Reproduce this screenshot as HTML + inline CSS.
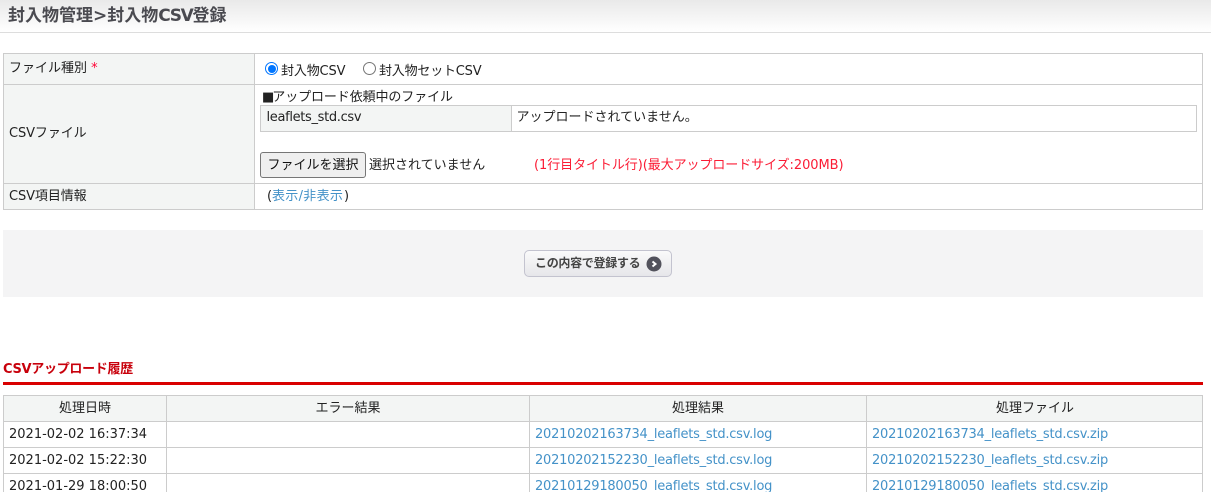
<!DOCTYPE html>
<html lang="ja">
<head>
<meta charset="utf-8">
<title>封入物CSV登録</title>
<style>
html,body{margin:0;padding:0;background:#fff;width:1211px;height:492px;overflow:hidden}
body{position:relative;font:13px/18px "DejaVu Sans","Noto Sans CJK JP",sans-serif;color:#222}
.a{position:absolute;white-space:nowrap}
.ln{position:absolute;background:#ccc}
a{color:#4492c8;text-decoration:none}
.f{letter-spacing:-.23px}
.hd{left:0;top:0;width:1211px;height:32px;background:linear-gradient(#e9e9e9,#fff);border-bottom:1px solid #ddd}
.sh{background:#f3f5f4;position:absolute}
.c{text-align:center}
.radio{position:absolute;width:13px;height:13px;box-sizing:border-box;border-radius:50%;background:#fff;border:1px solid #767676}
.radio.on{border:1px solid #0075ff;}
.radio.on:after{content:"";position:absolute;left:1.5px;top:1.5px;width:8px;height:8px;border-radius:50%;background:#0075ff}
.fbtn{position:absolute;left:260px;top:152px;width:106px;height:26px;box-sizing:border-box;border:1px solid #767676;border-radius:3px;background:#efefef;text-align:center;line-height:25px;color:#111}
.sub{left:3px;top:230px;width:1200px;height:67px;background:#f4f4f5}
.btn{position:absolute;left:524px;top:250px;width:148px;height:27px;box-sizing:border-box;border:1px solid #c3c3cf;border-radius:5px;background:linear-gradient(#fafafa,#e6e6ea);font-weight:bold;color:#444;font-size:12px;line-height:24px;padding-left:10px;letter-spacing:-.3px}
</style>
</head>
<body>
<div class="a hd"></div>
<div class="a" style="left:8px;top:4px;font-size:17px;line-height:24px;font-weight:bold;color:#4a4a50">封入物管理&gt;封入物<span style="letter-spacing:-1.3px">CSV</span>登録</div>

<!-- form table -->
<div class="sh" style="left:3px;top:53px;width:251px;height:156px"></div>
<div class="ln" style="left:3px;top:53px;width:1200px;height:1px"></div>
<div class="ln" style="left:3px;top:84px;width:1200px;height:1px"></div>
<div class="ln" style="left:3px;top:183px;width:1200px;height:1px"></div>
<div class="ln" style="left:3px;top:209px;width:1200px;height:1px"></div>
<div class="ln" style="left:3px;top:53px;width:1px;height:157px"></div>
<div class="ln" style="left:254px;top:53px;width:1px;height:157px"></div>
<div class="ln" style="left:1202px;top:53px;width:1px;height:157px"></div>

<div class="a" style="left:9px;top:60px">ファイル種別 <span style="color:#f03">*</span></div>
<div class="a" style="left:9px;top:125px;letter-spacing:-.1px">CSVファイル</div>
<div class="a" style="left:9px;top:188px;letter-spacing:-.1px">CSV項目情報</div>

<span class="radio on" style="left:265px;top:62px"></span>
<div class="a" style="left:281px;top:63px;letter-spacing:-.15px">封入物CSV</div>
<span class="radio" style="left:363px;top:62px"></span>
<div class="a" style="left:379px;top:63px;letter-spacing:-.2px">封入物セットCSV</div>

<div class="a" style="left:262px;top:89px;letter-spacing:-.1px"><span style="letter-spacing:-2px">■</span>アップロード依頼中のファイル</div>

<div class="sh" style="left:260px;top:105px;width:251px;height:26px"></div>
<div class="ln" style="left:260px;top:105px;width:937px;height:1px"></div>
<div class="ln" style="left:260px;top:131px;width:937px;height:1px"></div>
<div class="ln" style="left:260px;top:105px;width:1px;height:27px"></div>
<div class="ln" style="left:511px;top:105px;width:1px;height:27px"></div>
<div class="ln" style="left:1196px;top:105px;width:1px;height:27px"></div>
<div class="a" style="left:266.5px;top:109px;letter-spacing:-.33px">leaflets_std.csv</div>
<div class="a" style="left:516.5px;top:109px">アップロードされていません。</div>

<div class="fbtn">ファイルを選択</div>
<div class="a" style="left:369px;top:157px">選択されていません</div>
<div class="a" style="left:534px;top:157px;color:#fb1c35;letter-spacing:-.07px">(1行目タイトル行)(最大アップロードサイズ:200MB)</div>

<div class="a" style="left:267px;top:188px">(</div>
<div class="a" style="left:272px;top:188px;letter-spacing:.3px"><a href="#">表示/非表示</a></div>
<div class="a" style="left:344px;top:188px">)</div>

<!-- submit area -->
<div class="a sub"></div>
<div class="btn">この内容で登録する
<svg style="position:absolute;left:121px;top:5px" width="16" height="16" viewBox="0 0 16 16"><circle cx="8" cy="8" r="7.5" fill="#52525c"/><path d="M6.5 5.5L9.5 8l-3 2.5" fill="none" stroke="#fff" stroke-width="2"/></svg>
</div>

<!-- history -->
<div class="a" style="left:3px;top:361px;font-size:13px;font-weight:bold;color:#c8000b;letter-spacing:-.3px">CSVアップロード履歴</div>
<div class="a" style="left:3px;top:382px;width:1200px;height:3px;background:#d90000"></div>

<div class="sh" style="left:3px;top:395px;width:1200px;height:26px"></div>
<div class="ln" style="left:3px;top:395px;width:1200px;height:1px"></div>
<div class="ln" style="left:3px;top:421px;width:1200px;height:1px"></div>
<div class="ln" style="left:3px;top:447px;width:1200px;height:1px"></div>
<div class="ln" style="left:3px;top:473px;width:1200px;height:1px"></div>
<div class="ln" style="left:3px;top:395px;width:1px;height:97px"></div>
<div class="ln" style="left:166px;top:395px;width:1px;height:97px"></div>
<div class="ln" style="left:529px;top:395px;width:1px;height:97px"></div>
<div class="ln" style="left:866px;top:395px;width:1px;height:97px"></div>
<div class="ln" style="left:1202px;top:395px;width:1px;height:97px"></div>

<div class="a c" style="left:3px;width:164px;top:400px">処理日時</div>
<div class="a c" style="left:166px;width:364px;top:400px">エラー結果</div>
<div class="a c" style="left:529px;width:338px;top:400px">処理結果</div>
<div class="a c" style="left:866px;width:338px;top:400px">処理ファイル</div>

<div class="a" style="left:9px;top:426px">2021-02-02 16:37:34</div>
<div class="a f" style="left:535px;top:426px"><a href="#">20210202163734_leaflets_std.csv.log</a></div>
<div class="a f" style="left:872px;top:426px"><a href="#">20210202163734_leaflets_std.csv.zip</a></div>

<div class="a" style="left:9px;top:452px">2021-02-02 15:22:30</div>
<div class="a f" style="left:535px;top:452px"><a href="#">20210202152230_leaflets_std.csv.log</a></div>
<div class="a f" style="left:872px;top:452px"><a href="#">20210202152230_leaflets_std.csv.zip</a></div>

<div class="a" style="left:9px;top:478px">2021-01-29 18:00:50</div>
<div class="a f" style="left:535px;top:478px"><a href="#">20210129180050_leaflets_std.csv.log</a></div>
<div class="a f" style="left:872px;top:478px"><a href="#">20210129180050_leaflets_std.csv.zip</a></div>
</body>
</html>
